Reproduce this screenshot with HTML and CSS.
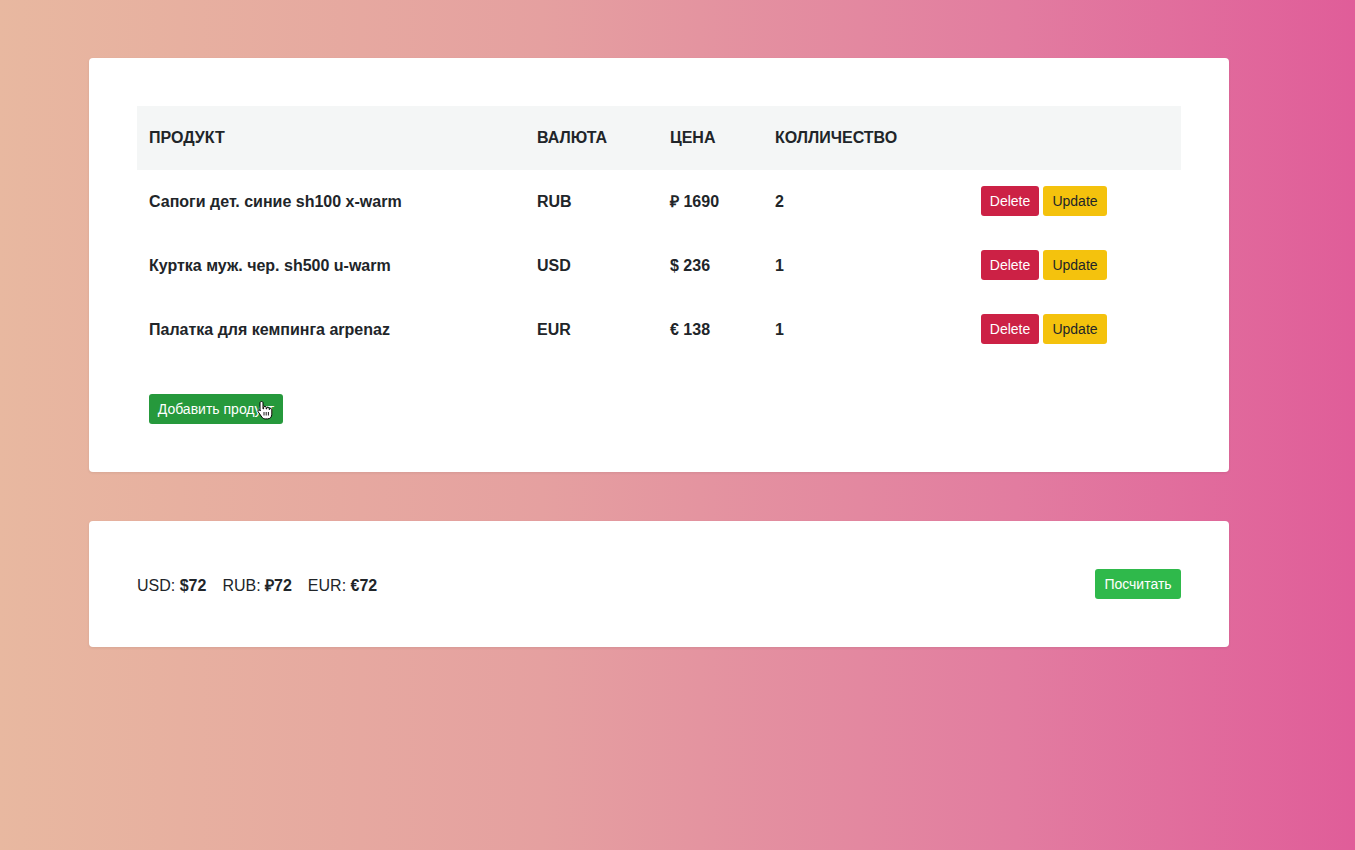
FILE: index.html
```html
<!DOCTYPE html>
<html lang="ru">
<head>
<meta charset="utf-8">
<link rel="stylesheet" href="styles.css">
</head>
<body>
<div class="page">
  <div class="card">
    <table class="products">
      <thead>
        <tr>
          <th class="c-name">ПРОДУКТ</th>
          <th class="c-cur">ВАЛЮТА</th>
          <th class="c-price">ЦЕНА</th>
          <th class="c-qty">КОЛЛИЧЕСТВО</th>
          <th class="c-act"></th>
        </tr>
      </thead>
      <tbody>
        <tr>
          <td>Сапоги дет. синие sh100 x-warm</td>
          <td>RUB</td>
          <td>₽ 1690</td>
          <td>2</td>
          <td><div class="actions"><button class="btn btn-danger">Delete</button><button class="btn btn-warning">Update</button></div></td>
        </tr>
        <tr>
          <td>Куртка муж. чер. sh500 u-warm</td>
          <td>USD</td>
          <td>$ 236</td>
          <td>1</td>
          <td><div class="actions"><button class="btn btn-danger">Delete</button><button class="btn btn-warning">Update</button></div></td>
        </tr>
        <tr>
          <td>Палатка для кемпинга arpenaz</td>
          <td>EUR</td>
          <td>€ 138</td>
          <td>1</td>
          <td><div class="actions"><button class="btn btn-danger">Delete</button><button class="btn btn-warning">Update</button></div></td>
        </tr>
      </tbody>
    </table>
    <div class="add-row">
      <button class="btn btn-add">Добавить продукт</button>
      <svg class="cursor" width="16" height="20" viewBox="0 0 16 20">
        <path d="M4.5 1.5c.8 0 1.5.6 1.5 1.4v6l.6-.1V7.6c0-.8.6-1.3 1.3-1.3s1.3.5 1.3 1.3v1.3l.5.1V8.4c0-.7.6-1.2 1.2-1.2s1.2.5 1.2 1.2v1l.5.1c0-.6.5-1 1.1-1s1.1.5 1.1 1.2v4.6c0 2.6-1.6 4.6-4.3 4.6H8.3c-1.6 0-2.6-.7-3.5-1.9L1.3 12c-.5-.6-.4-1.4.2-1.8.6-.4 1.4-.3 1.9.3L3 11V2.9c0-.8.7-1.4 1.5-1.4z" fill="#fff" stroke="#000" stroke-width="1"/>
        <path d="M7 12v3.5M9.2 12v3.5M11.4 12v3.5" stroke="#000" stroke-width="0.9"/>
      </svg>
    </div>
  </div>

  <div class="card summary">
    <div class="totals">
      <span>USD: <b>$72</b></span>
      <span>RUB: <b>₽72</b></span>
      <span>EUR: <b>€72</b></span>
    </div>
    <button class="btn btn-calc">Посчитать</button>
  </div>
</div>
</body>
</html>
```

FILE: styles.css
```css
html, body {
  margin: 0;
  padding: 0;
}
body {
  width: 1355px;
  height: 850px;
  overflow: hidden;
  background: linear-gradient(to right, #e8b8a0 0%, #e5a0a0 40%, #e27ca0 75%, #e05d99 100%);
  font-family: "Liberation Sans", Arial, sans-serif;
  color: #212529;
}
.page {
  width: 1140px;
  margin-left: 89px;
  padding-top: 58px;
  display: flex;
  flex-direction: column;
  gap: 49px;
}
.card {
  background: #fff;
  border-radius: 4px;
  padding: 48px;
  box-shadow: 0 1px 3px rgba(0,0,0,0.08);
}
.products {
  width: 1044px;
  table-layout: fixed;
  border-collapse: collapse;
  font-size: 16px;
  line-height: 20px;
  font-weight: bold;
}
.products th, .products td {
  height: 64px;
  padding: 0 12px;
  text-align: left;
  vertical-align: middle;
  box-sizing: border-box;
}
.products thead tr {
  background: #f4f6f6;
}
.c-name { width: 388px; }
.c-cur { width: 133px; }
.c-price { width: 105px; }
.c-qty { width: 206px; }
.c-act { width: 212px; }
.actions {
  display: flex;
  gap: 4px;
  margin-top: -2px;
}
.btn {
  font-family: "Liberation Sans", Arial, sans-serif;
  font-size: 14px;
  font-weight: normal;
  line-height: 20px;
  height: 30px;
  padding: 4px 0;
  border: 1px solid transparent;
  border-radius: 3px;
  cursor: pointer;
  text-align: center;
}
.btn-danger {
  background: #cc2145;
  color: #fff;
  width: 58px;
}
.btn-warning {
  background: #f4c20d;
  color: #212529;
  width: 64px;
}
.add-row {
  position: relative;
  padding: 32px 12px 0;
  line-height: 0;
}
.btn-add {
  background: #26993c;
  color: #fff;
  width: 134px;
}
.cursor {
  position: absolute;
  left: 120px;
  top: 38px;
}
.summary {
  display: flex;
  align-items: center;
  justify-content: space-between;
}
.totals {
  display: flex;
  align-items: baseline;
  gap: 16px;
  font-size: 16px;
  line-height: 20px;
  height: 20px;
  margin-top: 4px;
}
.totals span {
  line-height: 20px;
  display: block;
  height: 20px;
}
.btn-calc {
  background: #2fb94b;
  color: #fff;
  width: 86px;
}
```
